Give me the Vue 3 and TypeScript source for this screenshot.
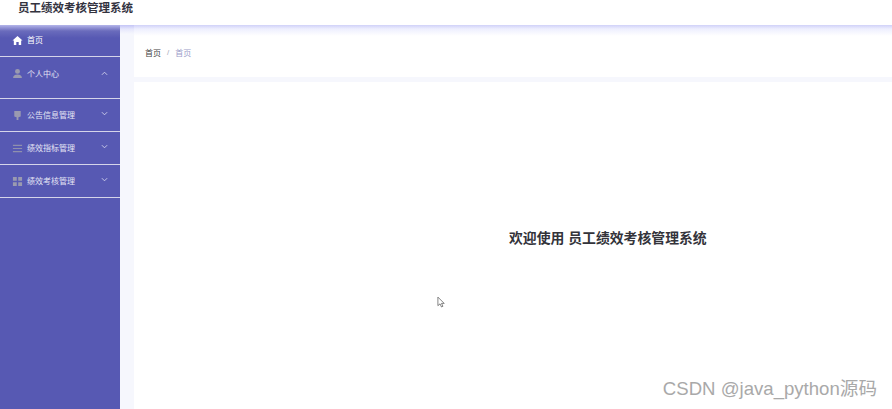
<script setup lang="ts">
interface NavItem { label: string; icon: string; arrow: '' | 'up' | 'down'; cls: string }
const items: NavItem[] = [
  { label: '首页', icon: 'home', arrow: '', cls: 'first' },
  { label: '个人中心', icon: 'user', arrow: 'up', cls: 'open' },
  { label: '公告信息管理', icon: 'cup', arrow: 'down', cls: '' },
  { label: '绩效指标管理', icon: 'list', arrow: 'down', cls: '' },
  { label: '绩效考核管理', icon: 'grid', arrow: 'down', cls: '' },
]
</script>

<template>
  <div class="page">
    <header class="topbar"><span class="title">员工绩效考核管理系统</span></header>
    <div class="body">
      <aside class="side">
        <div v-for="it in items" :key="it.label" class="nav" :class="it.cls">
          <svg class="ico" viewBox="0 0 12 12" width="11" height="11">
            <path v-if="it.icon === 'home'" fill="#fff" d="M6 1 L11.5 6 L10 6 V11 H7.3 V7.5 H4.7 V11 H2 V6 H.5 Z" />
            <path v-else-if="it.icon === 'user'" fill="#9a9ab0" d="M6 1a2.6 2.6 0 1 1 0 5.4A2.6 2.6 0 0 1 6 1ZM1.2 11c0-2.4 1.6-3.8 4.8-3.8s4.8 1.4 4.8 3.8Z" />
            <path v-else-if="it.icon === 'cup'" fill="#9a9ab0" d="M2.5 1H9.5V7L7 8V11H5V8L2.5 7Z" />
            <path v-else-if="it.icon === 'list'" fill="#8f90ad" d="M1 2H11V3.2H1ZM1 5.4H11V6.6H1ZM1 8.8H11V10H1Z" />
            <path v-else fill="#9a9ab0" d="M1 1H5.2V5.2H1ZM6.8 1H11V5.2H6.8ZM1 6.8H5.2V11H1ZM6.8 6.8H11V11H6.8Z" />
          </svg>
          <span class="label">{{ it.label }}</span>
          <svg v-if="it.arrow" class="arrow" viewBox="0 0 8 5" width="7" height="5">
            <path fill="none" stroke="#d6d6ee" stroke-width="1" :d="it.arrow === 'up' ? 'M1 4 L4 1 L7 4' : 'M1 1 L4 4 L7 1'" />
          </svg>
        </div>
      </aside>
      <main class="content">
        <div class="crumb">
          <span class="c1">首页</span><span class="sep">/</span><span class="c2">首页</span>
        </div>
        <div class="card"><h1 class="welcome">欢迎使用 员工绩效考核管理系统</h1></div>
      </main>
    </div>
    <svg class="cursor" viewBox="0 0 10 14" width="9" height="13">
      <path fill="#fff" stroke="#555" stroke-width=".8" d="M1 1 V10.5 L3.4 8.5 L5 12 L6.6 11.2 L5 8 H8 Z" />
    </svg>
    <div class="mark">CSDN @java_python源码</div>
  </div>
</template>

<style>
html, body { margin: 0; background: #fff; }
</style>

<style scoped>
.page {
  position: relative;
  width: 892px;
  height: 409px;
  overflow: hidden;
  display: flex;
  flex-direction: column;
  font-family: "Liberation Sans", "Noto Sans CJK SC", sans-serif;
}
.topbar {
  height: 25px;
  flex: none;
  display: flex;
  align-items: flex-start;
  padding-left: 18px;
  background: #fff;
}
.title {
  font-size: 11.5px;
  font-weight: 700;
  line-height: 16px;
  color: #33333f;
}
.body {
  flex: 1;
  display: flex;
  min-height: 0;
}
.side {
  width: 120px;
  flex: none;
  background: linear-gradient(#b4b5ea 0, #6a6bbc 6px, #5759b3 13px);
}
.nav {
  height: 32px;
  border-bottom: 1px solid #d5d5ea;
  display: flex;
  align-items: center;
  padding: 0 12px;
  color: #e4e4f4;
  font-size: 8px;
}
.nav.first { height: 31px; color: #fff; }
.nav.open { height: 41px; }
.nav.open .label, .nav.open .ico { margin-top: -8px; }
.nav.open .arrow { margin-top: -9px; }
.nav.first .ico { margin-top: -1px; }
.nav.first .label { margin-top: -3px; }
.nav:not(.first):not(.open) .label { margin-top: -2px; }
.ico { flex: none; }
.label {
  margin-left: 4px;
  flex: 1;
}
.arrow { flex: none; margin-top: -4px; }
.content {
  flex: 1;
  min-width: 0;
  display: flex;
  flex-direction: column;
  gap: 5px;
  padding-left: 14px;
  background: linear-gradient(#c4c5f6 0, #e6e7fc 4px, #f6f7fd 9px);
}
.crumb {
  height: 52px;
  flex: none;
  box-sizing: border-box;
  padding: 2px 0 0 11px;
  display: flex;
  align-items: center;
  font-size: 8px;
  background: linear-gradient(#d0d1f8 0, #eeeffe 4px, #fff 11px);
}
.c1 { color: #444; }
.sep { margin: 0 6px; color: #a9a9b8; }
.c2 { color: #9a9cc9; }
.card {
  flex: 1;
  background: #fff;
  padding-left: 375px;
}
.welcome {
  margin: 146px 0 0;
  font-size: 13.85px;
  line-height: 20px;
  font-weight: 700;
  color: #33333a;
}
.cursor {
  position: absolute;
  left: 437px;
  top: 296px;
}
.mark {
  position: absolute;
  right: 15px;
  top: 379px;
  font-size: 18.6px;
  line-height: 20px;
  color: #a9a9a9;
}
</style>
